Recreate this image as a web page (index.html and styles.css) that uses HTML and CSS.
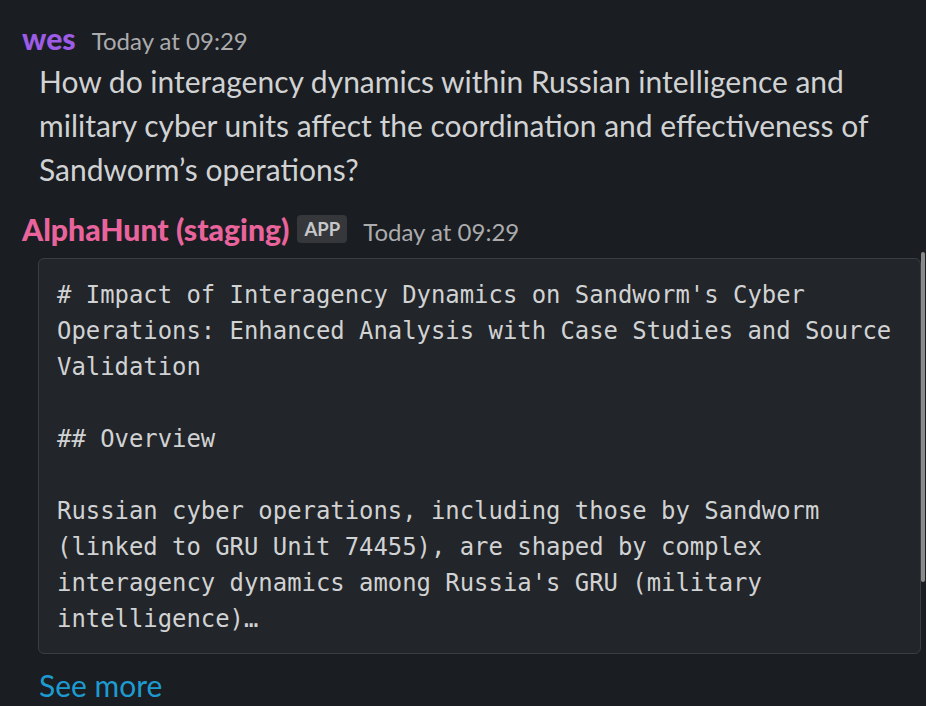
FILE: index.html
```html
<!DOCTYPE html>
<html>
<head>
<meta charset="utf-8">
<link rel="stylesheet" href="styles.css">
</head>
<body>
<div class="feed">
  <div class="msg">
    <div class="head">
      <span class="name name-user">wes</span>
      <span class="ts">Today at 09:29</span>
    </div>
    <div class="text">How do interagency dynamics within Russian intelligence and military cyber units affect the coordination and effectiveness of Sandworm’s operations?</div>
  </div>
  <div class="msg msg-bot">
    <div class="head">
      <span class="name name-bot">AlphaHunt (staging)</span>
      <span class="badge">APP</span>
      <span class="ts">Today at 09:29</span>
    </div>
    <pre class="code"># Impact of Interagency Dynamics on Sandworm's Cyber Operations: Enhanced Analysis with Case Studies and Source Validation

## Overview

Russian cyber operations, including those by Sandworm (linked to GRU Unit 74455), are shaped by complex interagency dynamics among Russia's GRU (military intelligence)…</pre>
    <a class="more" href="#">See more</a>
  </div>
</div>
<div class="scrollbar"></div>
</body>
</html>
```

FILE: styles.css
```css
html, body {
  margin: 0;
  padding: 0;
  background: #1a1d21;
  height: 100%;
  overflow: hidden;
}
body {
  font-family: Lato, "Noto Sans", sans-serif;
  color: #d1d2d3;
}
.feed {
  padding: 20px 5px 0 22px;
  display: flex;
  flex-direction: column;
  gap: 20px;
}
.head {
  display: flex;
  align-items: baseline;
  height: 36px;
  line-height: 36px;
}
.name {
  font-weight: 900;
  font-size: 30.2px;
}
.name-user { color: #9d5ce6; }
.name-bot { color: #e9649c; }
.ts {
  font-size: 24px;
  color: #ababad;
  margin-left: 16px;
}
.badge {
  align-self: center;
  margin-left: 8px;
  background: #35373b;
  color: #c6c7c9;
  font-weight: 700;
  font-size: 18.5px;
  line-height: 28px;
  padding: 0 7px;
  border-radius: 4px;
}
.badge + .ts { margin-left: 16px; }
.text {
  margin-top: 3px;
  padding-left: 17px;
  font-size: 30px;
  line-height: 44px;
  padding-right: 10px;
}
.code {
  margin: 11px 0 0 16px;
  padding: 18px 18px 16px 18px;
  background: #222529;
  border: 1px solid #3b3d41;
  border-radius: 6px;
  font-family: "DejaVu Sans Mono", "Liberation Mono", monospace;
  font-size: 23.9px;
  line-height: 36px;
  color: #d1d2d3;
  white-space: pre-wrap;
}
.more {
  display: block;
  margin: 9px 0 0 17px;
  font-size: 30px;
  line-height: 44px;
  color: #1d9bd1;
  text-decoration: none;
}
.scrollbar {
  position: fixed;
  top: 252px;
  right: 1px;
  width: 4px;
  height: 330px;
  border-radius: 2px;
  background: #8a8a8a;
}
```
